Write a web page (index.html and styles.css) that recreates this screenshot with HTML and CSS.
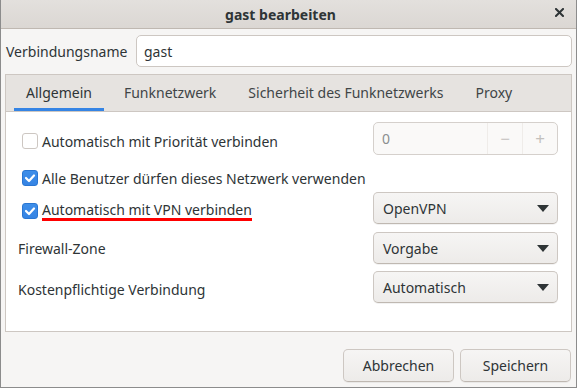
FILE: index.html
```html
<!DOCTYPE html>
<html lang="de">
<head>
<meta charset="utf-8">
<title>gast bearbeiten</title>
<link rel="stylesheet" href="styles.css">
</head>
<body>
<div class="window">
  <header class="titlebar">
    <span class="spacer"></span>
    <span class="title">gast bearbeiten</span>
    <span class="close">
      <svg width="9" height="9" viewBox="0 0 9 9"><path d="M1 1 L8 8 M8 1 L1 8" stroke="#2e3436" stroke-width="2" stroke-linecap="square" fill="none"/></svg>
    </span>
  </header>

  <main class="content">
    <div class="name-row">
      <label class="name-label">Verbindungsname</label>
      <div class="entry">gast</div>
    </div>

    <section class="notebook">
      <nav class="tabs">
        <div class="tab active">Allgemein</div>
        <div class="tab">Funknetzwerk</div>
        <div class="tab">Sicherheit des Funknetzwerks</div>
        <div class="tab">Proxy</div>
      </nav>
      <div class="page">
        <div class="row row-1">
          <label class="check"><span class="box"></span><span>Automatisch mit Priorität verbinden</span></label>
          <div class="spin">
            <span class="spin-value">0</span>
            <span class="spin-btn">−</span>
            <span class="spin-btn">+</span>
          </div>
        </div>
        <div class="row row-2">
          <label class="check"><span class="box checked"><svg width="12" height="10" viewBox="0 0 12 10"><path d="M2 5 L5 8 L10 2.5" stroke="#fff" stroke-width="2.2" fill="none" stroke-linecap="round" stroke-linejoin="round"/></svg></span><span>Alle Benutzer dürfen dieses Netzwerk verwenden</span></label>
        </div>
        <div class="row row-3">
          <label class="check"><span class="box checked"><svg width="12" height="10" viewBox="0 0 12 10"><path d="M2 5 L5 8 L10 2.5" stroke="#fff" stroke-width="2.2" fill="none" stroke-linecap="round" stroke-linejoin="round"/></svg></span><span class="marked">Automatisch mit VPN verbinden</span></label>
          <div class="combo"><span>OpenVPN</span><span class="arrow"></span></div>
        </div>
        <div class="row row-4">
          <span class="label">Firewall-Zone</span>
          <div class="combo"><span>Vorgabe</span><span class="arrow"></span></div>
        </div>
        <div class="row row-5">
          <span class="label">Kostenpflichtige Verbindung</span>
          <div class="combo"><span>Automatisch</span><span class="arrow"></span></div>
        </div>
      </div>
    </section>
  </main>

  <footer class="actions">
    <button class="btn">Abbrechen</button>
    <button class="btn">Speichern</button>
  </footer>
</div>
</body>
</html>
```

FILE: styles.css
```css
* { box-sizing: border-box; }

html, body {
  margin: 0;
  padding: 0;
  width: 577px;
  height: 388px;
  overflow: hidden;
  background: #f6f5f4;
  font-family: "Noto Sans", "Open Sans", sans-serif;
  font-size: 14px;
  color: #2e3436;
}

.window {
  width: 577px;
  height: 388px;
  border: 1px solid #8c8c8c;
  border-top: none;
  display: flex;
  flex-direction: column;
  background: #f6f5f4;
}

.titlebar {
  height: 29px;
  flex: none;
  display: grid;
  grid-template-columns: 1fr auto 1fr;
  align-items: center;
  background: linear-gradient(#e3e0dd, #dbd7d3);
  border-bottom: 1px solid #bfb8b1;
}

.title {
  font-weight: bold;
  font-size: 14px;
  margin-right: 16px;
}

.close {
  justify-self: end;
  margin-right: 12px;
  display: flex;
  margin-top: -4px;
}

.content {
  padding: 6px 4px 0 4px;
  flex: none;
}

.name-row {
  display: flex;
  align-items: center;
  height: 32px;
}

.name-label {
  width: 131px;
  padding-left: 1px;
}

.entry {
  flex: 1;
  height: 32px;
  background: #fff;
  border: 1px solid #cdc7c2;
  border-radius: 5px;
  padding: 0 7px;
  display: flex;
  align-items: center;
}

.notebook {
  margin-top: 7px;
  border: 1px solid #cdc7c2;
  height: 258px;
  display: flex;
  flex-direction: column;
}

.tabs {
  display: flex;
  gap: 8px;
  padding-left: 8px;
  height: 37px;
  background: #e6e3e0;
  border-bottom: 1px solid #cdc7c2;
}

.tab {
  padding: 0 12px;
  display: flex;
  align-items: center;
  padding-bottom: 2px;
  color: #3f4547;
}

.tab.active {
  color: #2e3436;
  box-shadow: inset 0 -3px 0 #3584e4;
}

.page {
  flex: 1;
  background: #fff;
  padding: 10px 13px 0 16px;
  display: flex;
  flex-direction: column;
}

.row {
  display: flex;
  align-items: center;
  justify-content: space-between;
}

.row-1 { height: 33px; }
.row-2 { height: 28px; margin-top: 9px; }
.row-3 { height: 32px; }
.row-4 { height: 32px; margin-top: 8px; }
.row-5 { height: 32px; margin-top: 7px; }

.check {
  display: flex;
  align-items: center;
  gap: 4px;
  padding-top: 5px;
}

.row-2 .check { padding-top: 0; }

.box {
  width: 16px;
  height: 16px;
  border: 1px solid #cdc7c2;
  border-radius: 3px;
  background: #fff;
  display: flex;
  align-items: center;
  justify-content: center;
  flex: none;
}

.box.checked {
  background: linear-gradient(#3e8ee9, #3584e4);
  border-color: #2a76d2;
}

.marked {
  display: inline-block;
  line-height: 17px;
  border-bottom: 3px solid #ff0000;
}

.label {
  margin-left: -4px;
}

.row-5 .label { padding-top: 4px; }

.spin {
  width: 185px;
  height: 33px;
  display: flex;
  border: 1px solid #d5d0cc;
  border-radius: 5px;
  background: #faf9f8;
  color: #8b8e8f;
}

.spin-value {
  flex: 1;
  display: flex;
  align-items: center;
  padding-left: 8px;
}

.spin-btn {
  width: 35px;
  border-left: 1px solid #efece9;
  display: flex;
  align-items: center;
  justify-content: center;
  color: #c3c0bc;
  font-size: 17px;
}

.combo {
  width: 185px;
  height: 32px;
  border: 1px solid #cdc7c2;
  border-bottom-color: #bfb8b1;
  border-radius: 5px;
  background: linear-gradient(#f6f5f4, #edebe9);
  display: flex;
  align-items: center;
  justify-content: space-between;
  padding: 0 8px 0 9px;
  box-shadow: 0 1px rgba(0,0,0,0.05);
}

.arrow {
  width: 0;
  height: 0;
  border-left: 6px solid transparent;
  border-right: 6px solid transparent;
  border-top: 7px solid #2e3436;
}

.actions {
  flex: 1;
  display: flex;
  justify-content: flex-end;
  gap: 6px;
  padding: 17px 5px 0 0;
}

.btn {
  min-width: 111px;
  height: 33px;
  font: inherit;
  color: #2e3436;
  border: 1px solid #cdc7c2;
  border-bottom-color: #bfb8b1;
  border-radius: 5px;
  background: linear-gradient(#f6f5f4, #edebe9);
  padding: 0 16px;
  box-shadow: 0 1px rgba(0,0,0,0.05);
}
```
